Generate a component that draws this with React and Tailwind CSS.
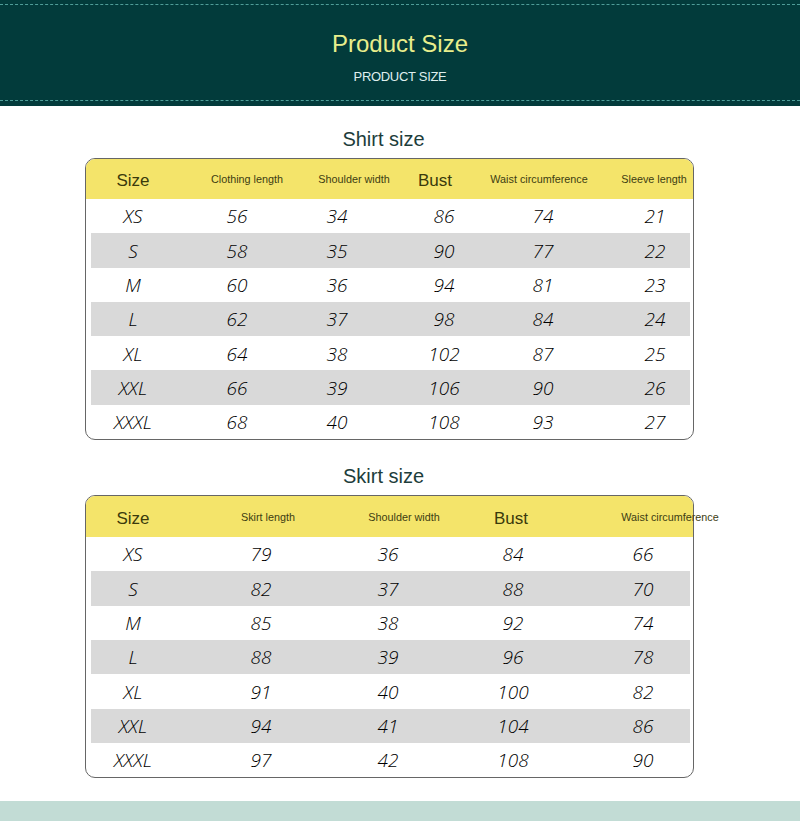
import React from "react";

const NUM = "font-['Open_Sans',sans-serif] italic font-light text-[19px] text-black";
const LABEL = "font-['Liberation_Sans',Arial,sans-serif]";

const shirt = {
  headers: [
    { t: "Size", big: true },
    { t: "Clothing length" },
    { t: "Shoulder width" },
    { t: "Bust", big: true },
    { t: "Waist circumference" },
    { t: "Sleeve length" },
  ],
  headMl: ["ml-[7px]", "ml-[34px]", "ml-[27px]", "ml-[1px]", "ml-[24px]", "ml-[35px]"],
  rowMl: ["ml-[2px]", "ml-[24px]", "ml-[20px]", "ml-[27px]", "ml-[19px]", "ml-[32px]"],
  rows: [
    ["XS", "56", "34", "86", "74", "21"],
    ["S", "58", "35", "90", "77", "22"],
    ["M", "60", "36", "94", "81", "23"],
    ["L", "62", "37", "98", "84", "24"],
    ["XL", "64", "38", "102", "87", "25"],
    ["XXL", "66", "39", "106", "90", "26"],
    ["XXXL", "68", "40", "108", "93", "27"],
  ],
  headH: "h-[40px]",
};

const skirt = {
  headers: [
    { t: "Size", big: true },
    { t: "Skirt length" },
    { t: "Shoulder width" },
    { t: "Bust", big: true },
    { t: "Waist circumference" },
  ],
  headMl: ["ml-[7px]", "ml-[55px]", "ml-[56px]", "ml-[27px]", "ml-[79px]"],
  rowMl: ["ml-[2px]", "ml-[48px]", "ml-[47px]", "ml-[45px]", "ml-[50px]"],
  rows: [
    ["XS", "79", "36", "84", "66"],
    ["S", "82", "37", "88", "70"],
    ["M", "85", "38", "92", "74"],
    ["L", "88", "39", "96", "78"],
    ["XL", "91", "40", "100", "82"],
    ["XXL", "94", "41", "104", "86"],
    ["XXXL", "97", "42", "108", "90"],
  ],
  headH: "h-[41px]",
};

function SizeTable({ data }) {
  return (
    <div className="w-[609px] ml-[85px] border border-[#666] rounded-[10px] bg-white">
      <div className={`flex items-center ${data.headH} bg-[#f4e46a] rounded-t-[9px]`}>
        {data.headers.map((h, i) => (
          <div
            key={i}
            className={`flex justify-center w-[80px] shrink-0 whitespace-nowrap ${data.headMl[i]} ${LABEL} ${
              h.big ? "text-[17px] text-[#3a3a0c] pt-[4px]" : "text-[10.8px] text-[#3d3d12] pt-[1px]"
            }`}
          >
            {h.t}
          </div>
        ))}
      </div>
      {data.rows.map((r, ri) => (
        <div
          key={ri}
          className={`flex items-center h-[34.3px] ml-[5px] mr-[3px] ${ri % 2 === 1 ? "bg-[#d9d9d9]" : ""}`}
        >
          {r.map((c, ci) => (
            <div
              key={ci}
              className={`flex justify-center w-[80px] shrink-0 whitespace-nowrap pt-[1px] ${data.rowMl[ci]} ${NUM}`}
            >
              {c}
            </div>
          ))}
        </div>
      ))}
    </div>
  );
}

export default function App() {
  return (
    <div className="w-[800px] h-[821px] bg-white overflow-hidden">
      <div className="h-[106px] bg-[#023b3b] pt-[4px]">
        <div className="border-t border-dashed border-[#4f9d98]" />
        <div className="flex flex-col items-center pt-[25px]">
          <div className={`${LABEL} text-[24px] leading-[28px] text-[#e8ee8c]`}>Product Size</div>
          <div className={`${LABEL} text-[13px] leading-[16px] mt-[11px] text-[#dfeeee] tracking-[-0.3px]`}>
            PRODUCT SIZE
          </div>
        </div>
        <div className="border-t border-dashed border-[#4f9d98] mt-[15px]" />
      </div>

      <div className={`${LABEL} text-[20px] leading-[24px] text-[#1d3d3b] text-center mt-[21px] pr-[33px]`}>
        Shirt size
      </div>
      <div className="mt-[7px]">
        <SizeTable data={shirt} />
      </div>

      <div className={`${LABEL} text-[20px] leading-[24px] text-[#1d3d3b] text-center mt-[24px] pr-[33px]`}>
        Skirt size
      </div>
      <div className="mt-[7px]">
        <SizeTable data={skirt} />
      </div>

      <div className="mt-[23px] h-[21px] bg-[#c2dcd5]" />
    </div>
  );
}
